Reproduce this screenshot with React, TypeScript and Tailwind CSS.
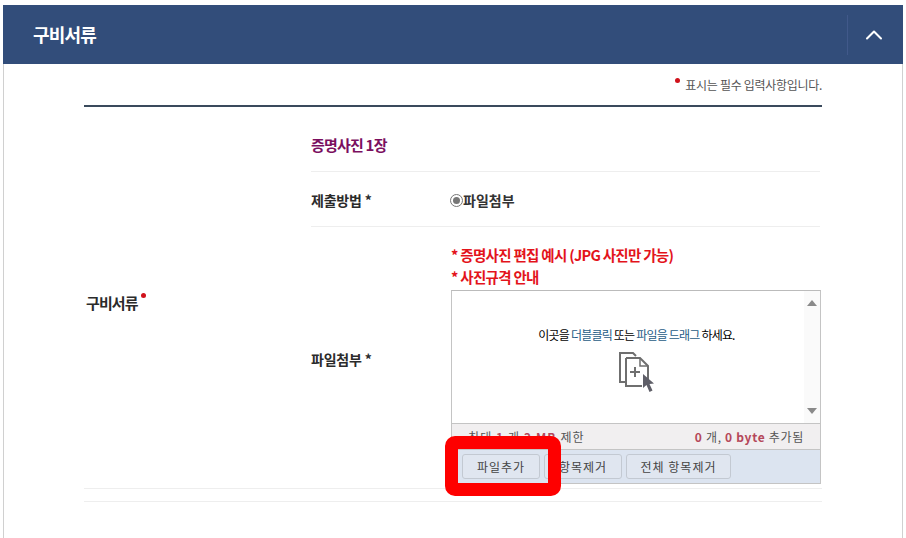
import { ChevronUp } from 'lucide-react';

const font = { kr: "font-['Noto_Sans_CJK_KR','Noto_Sans',sans-serif]" };

function DropIcon() {
  return (
    <svg width="38" height="42" viewBox="0 0 38 42" fill="none" stroke="#6f6f6f" strokeWidth="2">
      <path d="M8 31H2V2h13l3 3" />
      <path d="M8 7h14l8 8v16M8 7v28h16" />
      <path d="M22 7v8h8" strokeWidth="1.5" />
      <path d="M17 16v10M12 21h10" />
      <path d="M25 23l0 14 3.5-3 3 7 3-1.500-3-6.500 4.500-.5z" fill="#5f5f68" stroke="none" />
    </svg>
  );
}

function FileUploader() {
  return (
    <div className="w-[370px] h-[194px] flex flex-col border border-[#c4c4c4] border-t-[#bbbbbb]">
      <div className="relative h-[132px] bg-white flex flex-col items-center pt-[35px]">
        <p className="ml-[1px] text-[12px] leading-[18px] tracking-[-0.8px] text-black">
          이곳을 <span className="text-[#1f5c86]">더블클릭</span> 또는 <span className="text-[#1f5c86]">파일을 드래그</span> 하세요.
        </p>
        <div className="mt-[7px] ml-[1px]">
          <DropIcon />
        </div>
        <div className="absolute right-0 top-0 bottom-0 w-[16px] bg-[#fafafa] flex flex-col items-center justify-between py-[9px]">
          <span className="w-0 h-0 border-x-[5px] border-x-transparent border-b-[6px] border-b-[#8a8a8a]" />
          <span className="w-0 h-0 border-x-[5px] border-x-transparent border-t-[6px] border-t-[#8a8a8a]" />
        </div>
      </div>
      <div className="h-[26px] bg-[#f1eff0] border-t border-[#c4c4c4] flex items-center justify-between pl-[16px] pr-[16px] text-[12px] text-[#555555]">
        <span className="tracking-[1.1px]">
          최대 <b className="text-[#b5485a]">1</b> 개 <b className="text-[#b5485a]">2 MB</b> 제한
        </span>
        <span className="tracking-[0.7px]">
          <b className="text-[#b5485a]">0</b> 개, <b className="text-[#b5485a]">0 byte</b> 추가됨
        </span>
      </div>
      <div className="flex-1 bg-[#dce4f0] border-t border-[#c4c4c4] flex items-center gap-[4px] pl-[10px]">
        <button className="w-[78px] h-[25px] rounded-[3px] border border-[#c3c9d2] bg-[#e0e6f0] text-[12px] tracking-[1px] text-[#444444]">파일추가</button>
        <button className="w-[78px] h-[25px] rounded-[3px] border border-[#c3c9d2] bg-[#e0e6f0] text-[12px] tracking-[1px] text-[#444444]">항목제거</button>
        <button className="w-[105px] h-[25px] rounded-[3px] border border-[#c3c9d2] bg-[#e0e6f0] text-[12px] tracking-[1px] text-[#444444]">전체 항목제거</button>
      </div>
    </div>
  );
}

export default function App() {
  return (
    <div className={`relative w-[906px] h-[538px] overflow-hidden bg-white pt-[5px] pl-[3px] ${font.kr}`}>
      <div className="w-[900px] h-[533px] border-x border-[#d0d0d0]">
        <header className="-mx-px h-[59px] bg-[#324d7a] flex items-center justify-between">
          <h2 className="ml-[30px] text-[18px] font-bold tracking-[-0.8px] text-white">구비서류</h2>
          <div className="h-[40px] w-[56px] pr-[4px] border-l border-[#41598a] flex items-center justify-center">
            <ChevronUp className="w-[28px] h-[28px] text-white" strokeWidth={1.75} />
          </div>
        </header>

        <div className="ml-[80px] w-[738px]">
          <p className="h-[41px] flex justify-end items-center gap-[5px] text-[12px] tracking-[-0.3px] text-[#555555]">
            <span className="mb-[9px] w-[5px] h-[5px] rounded-full bg-[#d0121b]" />
            표시는 필수 입력사항입니다.
          </p>
          <div className="border-t-2 border-b border-t-[#3a4a5c] border-b-[#eeeeee] flex pt-[15px]">
            <div className="w-[227px] flex items-center pb-[4px]">
              <span className="ml-[2px] text-[15px] font-bold tracking-[-0.9px] text-[#2b2b2b]">구비서류</span>
              <span className="ml-[3px] mb-[16px] w-[5px] h-[5px] rounded-full bg-[#d0121b]" />
            </div>
            <div className="w-[509px]">
              <div className="h-[50px] flex items-center border-b border-[#eeeeee] pb-[3px] text-[15px] font-bold tracking-[-0.8px] text-[#7b0f5f]">
                증명사진 1장
              </div>
              <div className="h-[55px] flex items-center border-b border-[#eeeeee] pt-[2px]">
                <span className="w-[139px] text-[14px] font-bold tracking-[-0.2px] text-[#2b2b2b]">제출방법 *</span>
                <span className="w-[13px] h-[13px] rounded-full border border-[#777777] bg-white flex items-center justify-center">
                  <span className="w-[7px] h-[7px] rounded-full bg-[#777777]" />
                </span>
                <span className="text-[14px] font-bold tracking-[0px] text-[#333333]">파일첨부</span>
              </div>
              <div className="h-[261px] flex">
                <span className="w-[140px] shrink-0 self-center pt-[4px] text-[14px] font-bold tracking-[-0.2px] text-[#2b2b2b]">파일첨부 *</span>
                <div className="shrink-0 pt-[17px]">
                  <p className="text-[14.5px] leading-[22px] font-bold tracking-[-0.7px] text-[#e3131b]">* 증명사진 편집 예시 (JPG 사진만 가능)</p>
                  <p className="mb-[2px] text-[14.5px] leading-[22px] font-bold tracking-[-0.7px] text-[#e3131b]">* 사진규격 안내</p>
                  <FileUploader />
                </div>
              </div>
            </div>
          </div>
          <div className="mt-[12px] border-t border-[#eeeeee]" />
        </div>
      </div>

      <div className="absolute left-[445px] top-[436px] w-[116px] h-[60px] rounded-[10px] border-[13px] border-[#fe0000]" />
    </div>
  );
}
